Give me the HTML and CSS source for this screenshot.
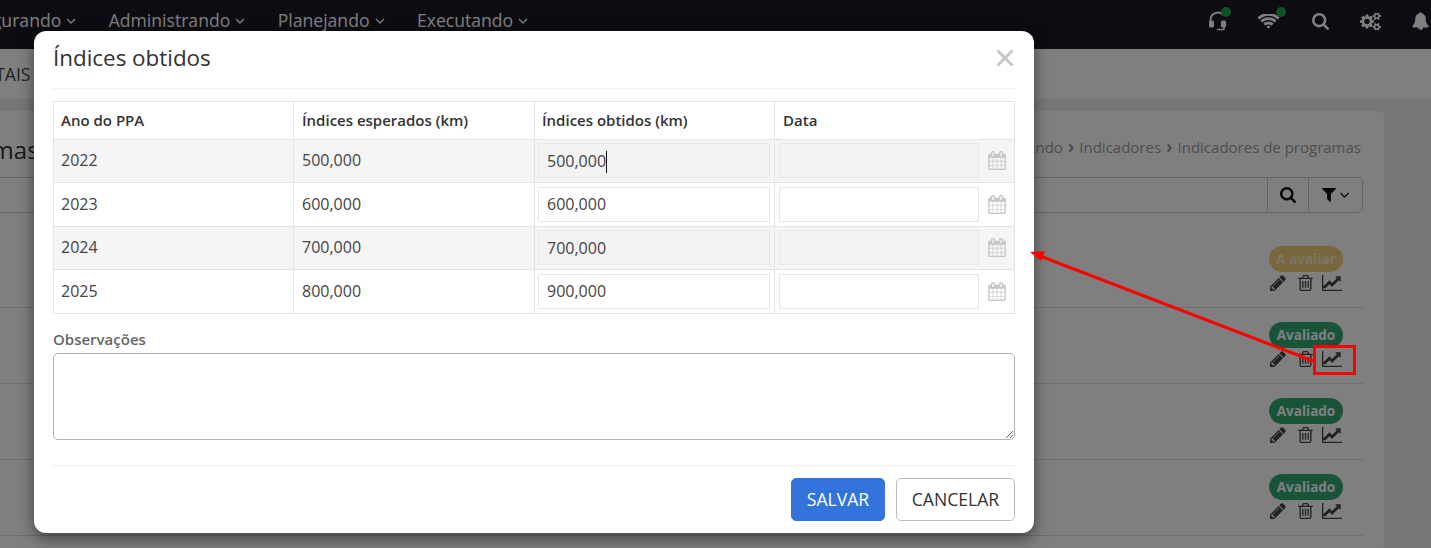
FILE: index.html
```html
<!DOCTYPE html>
<html lang="pt-BR">
<head>
<meta charset="utf-8">
<title>Índices obtidos</title>
<link rel="stylesheet" href="styles.css">
</head>
<body>
<svg class="defs" width="0" height="0" aria-hidden="true">
  <defs>
    <symbol id="i-search" viewBox="64 128 1664 1664"><path fill="currentColor" d="M1216 832q0-185-131.500-316.500t-316.500-131.500-316.500 131.500-131.500 316.500 131.500 316.500 316.500 131.500 316.500-131.500 131.500-316.500zm512 832q0 52-38 90t-90 38q-54 0-90-38l-343-342q-179 124-399 124-143 0-273.500-55.500t-225-150-150-225-55.500-273.500 55.500-273.500 150-225 225-150 273.500-55.500 273.500 55.500 225 150 150 225 55.500 273.500q0 220-124 399l343 343q37 37 37 90z"/></symbol>
    <symbol id="i-pencil" viewBox="128 128 1536 1536"><path fill="currentColor" d="M491 1536l91-91-235-235-91 91v107h128v128h107zm523-928q0-22-22-22-10 0-17 7l-542 542q-7 7-7 17 0 22 22 22 10 0 17-7l542-542q7-7 7-17zm-54-192l416 416-832 832h-416v-416zm683 96q0 53-37 90l-166 166-416-416 166-165q36-38 90-38 53 0 91 38l235 234q37 39 37 91z"/></symbol>
    <symbol id="i-trash" viewBox="192 128 1408 1536"><path fill="currentColor" d="M704 736v576q0 14-9 23t-23 9h-64q-14 0-23-9t-9-23v-576q0-14 9-23t23-9h64q14 0 23 9t9 23zm256 0v576q0 14-9 23t-23 9h-64q-14 0-23-9t-9-23v-576q0-14 9-23t23-9h64q14 0 23 9t9 23zm256 0v576q0 14-9 23t-23 9h-64q-14 0-23-9t-9-23v-576q0-14 9-23t23-9h64q14 0 23 9t9 23zm128 724v-948h-896v948q0 22 7 40.500t14.500 27 10.500 8.500h832q3 0 10.500-8.500t14.500-27 7-40.500zm-672-1076h448l-48-117q-7-9-17-11h-317q-10 2-17 11zm928 32v64q0 14-9 23t-23 9h-96v948q0 83-47 143.500t-113 60.500h-832q-66 0-113-58.500t-47-141.500v-952h-96q-14 0-23-9t-9-23v-64q0-14 9-23t23-9h309l70-167q15-37 54-63t79-26h320q40 0 79 26t54 63l70 167h309q14 0 23 9t9 23z"/></symbol>
    <symbol id="i-chart" viewBox="0 128 1920 1536"><path fill="currentColor" d="M1920 1536v128h-1920v-1536h128v1408h1792zm-128-1248v435q0 21-19.500 29.500t-35.500-7.500l-121-121-633 633q-10 10-23 10t-23-10l-233-233-416 416-192-192 585-585q10-10 23-10t23 10l233 233 464-464-121-121q-16-16-7.500-35.500t29.500-19.500h435q14 0 23 9t9 23z"/></symbol>
    <symbol id="i-cal" viewBox="0 0 1664 1792"><path fill="currentColor" d="M128 1664h288v-288h-288v288zm352 0h320v-288h-320v288zm-352-352h288v-320h-288v320zm352 0h320v-320h-320v320zm-352-384h288v-288h-288v288zm736 736h320v-288h-320v288zm-384-736h320v-288h-320v288zm768 736h288v-288h-288v288zm-384-352h320v-320h-320v320zm-352-864v-288q0-13-9.500-22.500t-22.500-9.500h-64q-13 0-22.500 9.500t-9.500 22.500v288q0 13 9.500 22.500t22.500 9.500h64q13 0 22.500-9.500t9.500-22.500zm736 864h288v-320h-288v320zm-384-384h320v-288h-320v288zm384 0h288v-288h-288v288zm32-480v-288q0-13-9.500-22.500t-22.500-9.500h-64q-13 0-22.500 9.500t-9.500 22.500v288q0 13 9.500 22.500t22.500 9.500h64q13 0 22.500-9.500t9.500-22.500zm384-64v1280q0 52-38 90t-90 38h-1408q-52 0-90-38t-38-90v-1280q0-52 38-90t90-38h128v-96q0-66 47-113t113-47h64q66 0 113 47t47 113v96h384v-96q0-66 47-113t113-47h64q66 0 113 47t47 113v96h128q52 0 90 38t38 90z"/></symbol>
    <symbol id="i-filter" viewBox="190 256 1412 1408"><path fill="currentColor" d="M1595 295q17 41-14 70l-493 493v742q0 42-39 59-13 5-25 5-27 0-45-19l-256-256q-19-19-19-45v-486l-493-493q-31-29-14-70 17-39 59-39h1280q42 0 59 39z"/></symbol>
    <symbol id="i-wifi" viewBox="0 256 2048 1280"><path fill="currentColor" d="M1024 1523q-20 0-93-73.500t-73-93.500q0-32 62.500-54t103.500-22 103.500 22 62.500 54q0 20-73 93.500t-93 73.500zm270-271q-2 0-40-25t-101.500-50-128.500-25-128.500 25-101 50-40.500 25q-18 0-93.500-75t-75.500-93q0-13 10-23 78-77 196-121t233-44 233 44 196 121q10 10 10 23 0 18-75.500 93t-93.500 75zm273-272q-11 0-23-8-136-105-252-154.500t-268-49.500q-85 0-170.500 22t-149 53-113.500 62-79 53-31 22q-17 0-92-75t-75-93q0-12 10-22 132-132 320-205t380-73 380 73 320 205q10 10 10 22 0 18-75 93t-92 75zm271-271q-11 0-22-9-179-157-371.500-236.500t-420.500-79.500-420.500 79.500-371.500 236.500q-11 9-22 9-17 0-92.500-75t-75.500-93q0-13 10-23 187-186 445-288t527-102 527 102 445 288q10 10 10 23 0 18-75.500 93t-92.500 75z"/></symbol>
    <symbol id="i-cogs" viewBox="0 128 1920 1536"><path fill="currentColor" d="M896 896q0-106-75-181t-181-75-181 75-75 181 75 181 181 75 181-75 75-181zm768 512q0-52-38-90t-90-38-90 38-38 90q0 53 37.500 90.500t90.500 37.500 90.500-37.500 37.500-90.500zm0-1024q0-52-38-90t-90-38-90 38-38 90q0 53 37.500 90.500t90.500 37.500 90.500-37.500 37.500-90.500zm-384 421v185q0 10-7 19.500t-16 10.500l-155 24q-11 35-32 76 34 48 90 115 7 11 7 20 0 12-7 19-23 30-82.500 89.500t-78.500 59.500q-11 0-21-7l-115-90q-37 19-77 31-11 108-23 155-7 24-30 24h-186q-11 0-20-7.500t-10-17.500l-23-153q-34-10-75-31l-118 89q-7 7-20 7-11 0-21-8-144-133-144-160 0-9 7-19 10-14 41-53t47-61q-23-44-35-82l-152-24q-10-1-17-9.500t-7-19.500v-185q0-10 7-19.500t16-10.500l155-24q11-35 32-76-34-48-90-115-7-11-7-20 0-12 7-20 22-30 82-89t79-59q11 0 21 7l115 90q34-18 77-32 11-108 23-154 7-24 30-24h186q11 0 20 7.500t10 17.500l23 153q34 10 75 31l118-89q8-7 20-7 11 0 21 8 144 133 144 160 0 8-7 19-12 16-42 54t-45 60q23 48 34 82l152 23q10 2 17 10.500t7 19.500zm640 533v140q0 16-149 31-12 27-30 52 51 113 51 138 0 4-4 7-122 71-124 71-8 0-46-47t-52-68q-20 2-30 2t-30-2q-14 21-52 68t-46 47q-2 0-124-71-4-3-4-7 0-25 51-138-18-25-30-52-149-15-149-31v-140q0-16 149-31 13-29 30-52-51-113-51-138 0-4 4-7 4-2 35-20t59-34 30-16q8 0 46 46.500t52 67.500q20-2 30-2t30 2q51-71 92-112l6-2q4 0 124 70 4 3 4 7 0 25-51 138 17 23 30 52 149 15 149 31zm0-1024v140q0 16-149 31-12 27-30 52 51 113 51 138 0 4-4 7-122 71-124 71-8 0-46-47t-52-68q-20 2-30 2t-30-2q-14 21-52 68t-46 47q-2 0-124-71-4-3-4-7 0-25 51-138-18-25-30-52-149-15-149-31v-140q0-16 149-31 13-29 30-52-51-113-51-138 0-4 4-7 4-2 35-20t59-34 30-16q8 0 46 46.500t52 67.500q20-2 30-2t30 2q51-71 92-112l6-2q4 0 124 70 4 3 4 7 0 25-51 138 17 23 30 52 149 15 149 31z"/></symbol>
    <symbol id="i-bell" viewBox="64 0 1664 1792"><path fill="currentColor" d="M912 1696q0-16-16-16-59 0-101.500-42.500t-42.500-101.500q0-16-16-16t-16 16q0 73 51.500 124.500t124.500 51.500q16 0 16-16zm816-288q0 52-38 90t-90 38h-448q0 106-75 181t-181 75-181-75-75-181h-448q-52 0-90-38t-38-90q50-42 91-88t85-119.500 74.500-158.500 50-206 19.500-260q0-152 117-282.500t307-158.500q-8-19-8-39 0-40 28-68t68-28 68 28 28 68q0 20-8 39 190 28 307 158.500t117 282.500q0 139 19.500 260t50 206 74.500 158.500 85 119.500 91 88z"/></symbol>
  </defs>
</svg>

<div class="page">
  <header class="topbar">
    <nav class="menu">
      <a class="menu-item">Configurando<svg class="chev" viewBox="0 0 10 6"><path d="M1 1l4 4 4-4"/></svg></a>
      <a class="menu-item">Administrando<svg class="chev" viewBox="0 0 10 6"><path d="M1 1l4 4 4-4"/></svg></a>
      <a class="menu-item">Planejando<svg class="chev" viewBox="0 0 10 6"><path d="M1 1l4 4 4-4"/></svg></a>
      <a class="menu-item">Executando<svg class="chev" viewBox="0 0 10 6"><path d="M1 1l4 4 4-4"/></svg></a>
    </nav>
    <div class="tools">
      <span class="tool tool-head">
        <svg viewBox="0 0 20 20" width="20" height="20"><path d="M2.500 12V9a7.500 7.500 0 0 1 13-5" fill="none" stroke="#fff" stroke-width="2"/><rect x="1" y="9.500" width="5" height="7" rx="1.500" fill="#fff"/><rect x="13" y="9.500" width="5" height="7" rx="1.500" fill="#fff"/><path d="M16 16v2.500H9" fill="none" stroke="#fff" stroke-width="1.400"/></svg>
        <i class="dot"></i>
      </span>
      <span class="tool tool-wifi">
        <svg width="23" height="15"><use href="#i-wifi"/></svg>
        <i class="dot"></i>
      </span>
      <span class="tool tool-search"><svg width="17" height="17"><use href="#i-search"/></svg></span>
      <span class="tool tool-gears"><svg width="21" height="17"><use href="#i-cogs"/></svg></span>
      <span class="tool tool-bell"><svg width="17" height="18"><use href="#i-bell"/></svg></span>
    </div>
  </header>

  <div class="subbar"><span class="subbar-text">PORTAIS</span></div>

  <main class="card">
    <div class="card-head">
      <h1 class="page-title">Indicadores de programas</h1>
      <p class="crumbs">Planejando <b class="sep">›</b> Indicadores <b class="sep">›</b> Indicadores de programas</p>
    </div>
    <div class="searchbar">
      <span class="search-fill"></span>
      <span class="search-btn"><svg width="16" height="16"><use href="#i-search"/></svg></span>
      <span class="filter-btn">
        <svg width="14" height="14"><use href="#i-filter"/></svg>
        <svg class="chev chev-dark" viewBox="0 0 10 6"><path d="M1 1l4 4 4-4"/></svg>
      </span>
    </div>
    <ul class="rows">
      <li class="row"><span class="badge badge-wait">A avaliar</span><span class="actions"><svg class="a-pencil"><use href="#i-pencil"/></svg><svg class="a-trash"><use href="#i-trash"/></svg><svg class="a-chart"><use href="#i-chart"/></svg></span></li>
      <li class="row"><span class="badge badge-done">Avaliado</span><span class="actions"><svg class="a-pencil"><use href="#i-pencil"/></svg><svg class="a-trash"><use href="#i-trash"/></svg><svg class="a-chart"><use href="#i-chart"/></svg></span></li>
      <li class="row"><span class="badge badge-done">Avaliado</span><span class="actions"><svg class="a-pencil"><use href="#i-pencil"/></svg><svg class="a-trash"><use href="#i-trash"/></svg><svg class="a-chart"><use href="#i-chart"/></svg></span></li>
      <li class="row"><span class="badge badge-done">Avaliado</span><span class="actions"><svg class="a-pencil"><use href="#i-pencil"/></svg><svg class="a-trash"><use href="#i-trash"/></svg><svg class="a-chart"><use href="#i-chart"/></svg></span></li>
    </ul>
  </main>

  <div class="backdrop"></div>

  <section class="modal">
    <header class="modal-head">
      <h2 class="modal-title">Índices obtidos</h2>
      <svg class="modal-close" viewBox="0 0 18 18" role="img" aria-label="Fechar"><path d="M1.500 1.500l15 15M16.500 1.500l-15 15"/></svg>
    </header>
    <table class="grid">
      <colgroup><col class="c1"><col class="c2"><col class="c3"><col class="c4"></colgroup>
      <thead>
        <tr><th>Ano do PPA</th><th>Índices esperados (km)</th><th>Índices obtidos (km)</th><th>Data</th></tr>
      </thead>
      <tbody>
        <tr class="h1"><td>2022</td><td>500,000</td><td class="cell-field"><div class="field is-off">500,000<span class="caret"></span></div></td><td class="cell-field"><div class="date"><div class="field is-off"></div><svg class="cal"><use href="#i-cal"/></svg></div></td></tr>
        <tr class="h2"><td>2023</td><td>600,000</td><td class="cell-field"><div class="field">600,000</div></td><td class="cell-field"><div class="date"><div class="field"></div><svg class="cal"><use href="#i-cal"/></svg></div></td></tr>
        <tr class="h1"><td>2024</td><td>700,000</td><td class="cell-field"><div class="field is-off">700,000</div></td><td class="cell-field"><div class="date"><div class="field is-off"></div><svg class="cal"><use href="#i-cal"/></svg></div></td></tr>
        <tr class="h2"><td>2025</td><td>800,000</td><td class="cell-field"><div class="field">900,000</div></td><td class="cell-field"><div class="date"><div class="field"></div><svg class="cal"><use href="#i-cal"/></svg></div></td></tr>
      </tbody>
    </table>
    <label class="obs-label" for="obs">Observações</label>
    <textarea class="obs" id="obs"></textarea>
    <footer class="modal-foot">
      <button class="btn btn-primary" type="button">SALVAR</button>
      <button class="btn btn-default" type="button">CANCELAR</button>
    </footer>
  </section>

  <svg class="annot" viewBox="0 0 1431 548" width="1431" height="548" aria-hidden="true">
    <path d="M1313 361L1040 256" stroke="#f00" stroke-width="3" fill="none"/>
    <path d="M1030 252l15-1-4 10z" fill="#f00"/>
    <rect x="1314.500" y="346.500" width="40" height="27" fill="none" stroke="#f00" stroke-width="3"/>
  </svg>
</div>
</body>
</html>
```
FILE: styles.css
```css
* { box-sizing: border-box; }
html, body { margin: 0; padding: 0; }
body {
  height: 548px;
  overflow: hidden;
  font-family: "Open Sans", "Liberation Sans", sans-serif;
  font-size: 16px;
  color: #333;
  background: #eee;
}
.defs { position: absolute; }
.page { position: relative; height: 548px; overflow: hidden; }

/* Top bar */
.topbar {
  height: 49px;
  background: #181824;
  color: #fff;
  display: flex;
  align-items: flex-start;
  justify-content: space-between;
}
.menu { display: flex; margin-left: -51px; padding-top: 9px; }
.menu-item {
  display: flex;
  align-items: center;
  gap: 5px;
  margin-right: 32.400px;
  font-size: 17.600px;
  line-height: 22px;
  color: #fff;
}
.chev { width: 10px; height: 6px; margin-top: 2px; fill: none; stroke: #fff; stroke-width: 1.400; }
.chev-dark { stroke: #222; width: 11px; margin-top: 0; }
.tools { display: flex; width: 240px; height: 49px; flex: none; }
.tool { position: relative; display: flex; align-items: center; height: 42px; color: #fff; }
.tool-head { width: 59px; padding-left: 17px; }
.tool-wifi { width: 52px; padding-left: 7px; }
.tool-search { width: 50px; padding-left: 10px; }
.tool-gears { width: 50px; padding-left: 8px; }
.tool-bell { padding-left: 10px; }
.dot { position: absolute; top: 7px; width: 10px; height: 10px; border-radius: 50%; background: #1ca74a; }
.tool-head .dot { left: 30px; }
.tool-wifi .dot { left: 26px; }

.subbar {
  height: 50px;
  background: #fff;
  display: flex;
  align-items: center;
  padding-right: 20px;
}
.subbar-text { margin-left: -40px; font-size: 17.600px; color: #444; }

/* Card behind the modal */
.card {
  margin: 12px 47px 0 -30px;
  padding: 0 21px 0 22px;
  height: 440px;
  background: #fff;
  border-radius: 6px;
}
.card-head { display: flex; justify-content: space-between; align-items: flex-start; padding-top: 22px; height: 66px; }
.page-title { margin: 0 0 0 -247px; font-size: 24px; font-weight: 400; line-height: 34px; color: #333; white-space: nowrap; }
.crumbs { margin: 3px 2px 0 0; font-size: 15px; line-height: 22px; color: #999da6; }
.sep { font-weight: 700; font-size: 18px; line-height: 18px; margin: 0 1px; }
.searchbar {
  display: flex;
  height: 36px;
  border: 1px solid #ccc;
  border-radius: 5px;
}
.search-fill { flex: 1; }
.search-btn, .filter-btn { display: flex; align-items: center; justify-content: center; border-left: 1px solid #ccc; color: #111; }
.search-btn { width: 41px; }
.filter-btn { width: 54px; gap: 3px; }
.rows { list-style: none; margin: 19px 0 0; padding: 0; }
.row {
  height: 76px;
  padding: 14px 20px 0 0;
  border-bottom: 1px solid #ddd;
  display: flex;
  flex-direction: column;
  align-items: flex-end;
}
.badge {
  width: 74px;
  height: 26px;
  border-radius: 13px;
  text-align: center;
  font-size: 13.500px;
  font-weight: 700;
  line-height: 26px;
  color: #fff;
}
.badge-wait { background: #f0cf7a; color: rgba(255,255,255,.62); }
.badge-done { background: #32a873; }
.actions { display: flex; align-items: center; width: 74px; height: 18px; margin-top: 2px; color: #444; }
.actions svg { display: block; }
.a-pencil { width: 16px; height: 16px; margin-left: 1px; }
.a-trash { width: 15px; height: 16px; margin-left: 12px; }
.a-chart { width: 20px; height: 16px; margin-left: 9px; }

.backdrop { position: absolute; inset: 0; background: rgba(0,0,0,.5); }

/* Modal */
.modal {
  position: absolute;
  left: 34px;
  top: 31px;
  width: 1000px;
  height: 502px;
  padding: 0 19px;
  background: #fff;
  border-radius: 12px;
  box-shadow: 0 5px 15px rgba(0,0,0,.5);
}
.modal-head {
  height: 58px;
  padding-bottom: 3px;
  border-bottom: 1px solid #eee;
  display: flex;
  align-items: center;
  justify-content: space-between;
}
.modal-title { margin: 0; font-size: 22.400px; font-weight: 400; line-height: 34px; color: #333; }
.modal-close { width: 18px; height: 18px; margin-right: 1px; fill: none; stroke: #c8c8c8; stroke-width: 3; }

.grid {
  width: 961px;
  margin-top: 12px;
  border-collapse: collapse;
  table-layout: fixed;
}
.c1 { width: 240px; }
.c2 { width: 241px; }
.c3 { width: 240px; }
.c4 { width: 240px; }
.grid th, .grid td { border: 1px solid #e4e4e4; padding: 0 8px 2px; text-align: left; }
.grid th:first-child, .grid td:first-child, .grid th:nth-child(3) { padding-left: 7px; }
.grid th { height: 38px; font-size: 15px; font-weight: 600; color: #333; }
.grid td { color: #444; }
.h1 td { height: 43px; background: #f5f5f5; }
.h2 td { height: 44px; background: #fff; }
.grid .cell-field { padding: 3px 4px 0 3px; vertical-align: top; }
.grid .h2 .cell-field { padding-top: 4px; }
.field {
  position: relative;
  flex: 1;
  height: 35px;
  padding-left: 8px;
  border: 1px solid #e8e8e8;
  background: #fff;
  line-height: 33px;
  color: #444;
}
.h1 .field { padding-top: 1px; }
.is-off { background: #f3f3f3; }
.caret { display: inline-block; width: 1px; height: 22px; background: #111; vertical-align: -6px; }
.date { display: flex; align-items: center; padding-left: 1px; }
.date .field { flex: none; width: 200px; }
.cal { width: 18px; height: 19px; margin-left: 9px; flex: none; color: #c6c6c6; }

.obs-label { display: block; margin-top: 15px; font-size: 15px; line-height: 20px; font-weight: 600; color: #666; }
.obs {
  display: block;
  width: 962px;
  height: 87px;
  margin-top: 4px;
  border: 1px solid #b5b5b5;
  border-radius: 5px;
  background: #fff;
  font: inherit;
}
.modal-foot {
  margin-top: 25px;
  padding-top: 12px;
  border-top: 1px solid #eee;
  display: flex;
  justify-content: flex-end;
  gap: 11px;
}
.btn {
  height: 43px;
  border-radius: 5px;
  font-family: "Open Sans", "Liberation Sans", sans-serif;
  font-size: 17.600px;
  padding: 0 10px 2px;
}
.btn-primary { width: 94px; background: #3273dc; border: 1px solid #3273dc; color: #fff; }
.btn-default { width: 119px; background: #fff; border: 1px solid #bbb; color: #333; }

.annot { position: absolute; left: 0; top: 0; pointer-events: none; }
```
